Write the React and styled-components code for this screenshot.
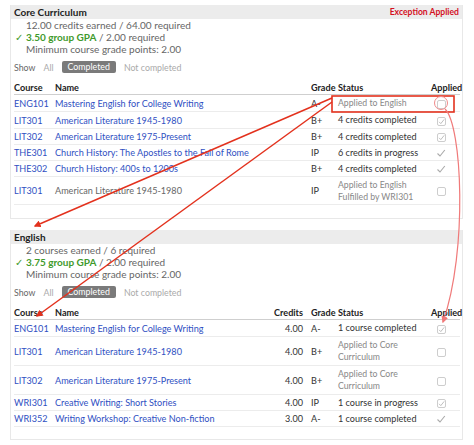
import React from 'react';
import styled, { createGlobalStyle } from 'styled-components';

const linkBlue = '#2f4fc2';
const red = '#e3311d';

const GlobalStyle = createGlobalStyle`
  body {
    margin: 0;
    background: #fff;
    font-family: 'Lato', 'Open Sans', sans-serif;
    color: #333;
  }
`;

const Page = styled.div`
  position: relative;
  width: 474px;
  height: 445px;
  padding: 5px 11px 0 10px;
  box-sizing: border-box;
  display: flex;
  flex-direction: column;
  gap: 11px;
`;

const Panel = styled.section`
  border: 1px solid #e8e8e8;
  border-top: none;
  padding-bottom: ${p => p.$bottom}px;
`;

const PanelHeader = styled.div`
  display: flex;
  justify-content: space-between;
  align-items: center;
  height: 14px;
  padding: 0 3px;
  background: #ececec;

  h2 {
    margin: 0;
    font-size: 10px;
    font-weight: 700;
    color: #222;
  }

  .exception {
    font-size: 8.6px;
    font-weight: 700;
    color: #d4111f;
  }
`;

const Summary = styled.div`
  display: flex;
  flex-direction: column;
  padding-left: 3px;
  font-size: 10px;
  color: #666;

  div {
    height: 12px;
    line-height: 12px;
    padding-left: 12px;
    position: relative;
  }

  .gpa {
    color: #3f9a2c;
    font-weight: 700;
  }

  .check {
    position: absolute;
    left: 1px;
    color: #3f9a2c;
  }
`;

const FilterBar = styled.div`
  display: flex;
  align-items: center;
  gap: 8px;
  margin-top: 6px;
  padding-left: 3px;
  height: 12px;
  font-size: 8.8px;
  color: #aaa;

  .label {
    color: #666;
  }
`;

const Pill = styled.span`
  background: #7a7a7a;
  color: #fff;
  border-radius: 2px;
  padding: 0 6px;
  line-height: 12px;
  height: 12px;
`;

const Table = styled.table`
  width: 446px;
  margin: 7px 0 0 3px;
  border-collapse: collapse;
  table-layout: fixed;
  font-size: 9.1px;

  th {
    font-weight: 700;
    color: #222;
    text-align: left;
    height: 14px;
    padding: 0;
    border-bottom: 1px solid #cfcfcf;
  }

  td {
    padding: 0;
    border-bottom: 1px solid #ececec;
    vertical-align: middle;
  }

  .right {
    text-align: right;
  }

  .grade {
    padding-left: 8px;
  }

  th.applied {
    text-align: right;
    padding-right: 1px;
  }

  td.applied {
    text-align: right;
    padding-right: 14px;
  }
`;

const Row = styled.tr`
  height: ${p => p.$h}px;
`;

const Code = styled.span`
  color: ${linkBlue};
`;

const Name = styled.span`
  color: ${p => (p.$plain ? '#666' : linkBlue)};
`;

const Status = styled.span`
  display: block;
  color: ${p => (p.$muted ? '#888' : '#333')};
  font-size: ${p => (p.$muted ? '8.7px' : '9.1px')};
  line-height: 12px;
`;

const Box = styled.span`
  display: inline-flex;
  align-items: center;
  justify-content: center;
  width: 9px;
  height: 9px;
  border: 1px solid #cdcdcd;
  border-radius: 2px;
  box-sizing: border-box;
  vertical-align: middle;
`;

const Tick = ({ size = 8 }) => (
  <svg width={size} height={size} viewBox="0 0 10 10" style={{ display: 'block' }}>
    <path d="M1.5 5.5 L4 8 L8.8 2" fill="none" stroke="#aaa" strokeWidth="1.1" />
  </svg>
);

const Applied = ({ kind }) => {
  if (kind === 'tick') {
    return <span style={{ display: 'inline-block', verticalAlign: 'middle' }}><Tick size={10} /></span>;
  }
  return <Box>{kind === 'box-tick' ? <Tick size={7} /> : null}</Box>;
};

const Overlay = styled.svg`
  position: absolute;
  top: 0;
  left: 0;
  pointer-events: none;
`;

const core = [
  { code: 'ENG101', name: 'Mastering English for College Writing', grade: 'A-', status: 'Applied to English', muted: true, applied: 'box', h: 17 },
  { code: 'LIT301', name: 'American Literature 1945-1980', grade: 'B+', status: '4 credits completed', applied: 'box-tick', h: 17 },
  { code: 'LIT302', name: 'American Literature 1975-Present', grade: 'B+', status: '4 credits completed', applied: 'box-tick', h: 16 },
  { code: 'THE301', name: 'Church History: The Apostles to the Fall of Rome', grade: 'IP', status: '6 credits in progress', applied: 'tick', h: 16 },
  { code: 'THE302', name: 'Church History: 400s to 1200s', grade: 'B+', status: '4 credits completed', applied: 'tick', h: 16 },
  { code: 'LIT301', name: 'American Literature 1945-1980', plain: true, grade: 'IP', status: ['Applied to English', 'Fulfilled by WRI301'], muted: true, applied: 'box', h: 28 },
];

const english = [
  { code: 'ENG101', name: 'Mastering English for College Writing', credits: '4.00', grade: 'A-', status: '1 course completed', applied: 'box-tick', h: 17 },
  { code: 'LIT301', name: 'American Literature 1945-1980', credits: '4.00', grade: 'B+', status: ['Applied to Core', 'Curriculum'], muted: true, applied: 'box', h: 29 },
  { code: 'LIT302', name: 'American Literature 1975-Present', credits: '4.00', grade: 'B+', status: ['Applied to Core', 'Curriculum'], muted: true, applied: 'box', h: 29 },
  { code: 'WRI301', name: 'Creative Writing: Short Stories', credits: '4.00', grade: 'IP', status: '1 course in progress', applied: 'box-tick', h: 16 },
  { code: 'WRI352', name: 'Writing Workshop: Creative Non-fiction', credits: '3.00', grade: 'A-', status: '1 course completed', applied: 'tick', h: 16 },
];

const StatusCell = ({ row }) => {
  const lines = Array.isArray(row.status) ? row.status : [row.status];
  return (
    <td>
      {lines.map(l => (
        <Status key={l} $muted={row.muted}>{l}</Status>
      ))}
    </td>
  );
};

const CourseTable = ({ rows, credits }) => (
  <Table>
    <colgroup>
      <col style={{ width: 41 }} />
      <col />
      {credits && <col style={{ width: 41 }} />}
      <col style={{ width: 35 }} />
      <col style={{ width: 93 }} />
      <col style={{ width: 29 }} />
    </colgroup>
    <thead>
      <tr>
        <th>Course</th>
        <th>Name</th>
        {credits && <th className="right">Credits</th>}
        <th className="grade">Grade</th>
        <th>Status</th>
        <th className="applied">Applied</th>
      </tr>
    </thead>
    <tbody>
      {rows.map((r, i) => (
        <Row key={i} $h={r.h}>
          <td><Code>{r.code}</Code></td>
          <td><Name $plain={r.plain}>{r.name}</Name></td>
          {credits && <td className="right">{r.credits}</td>}
          <td className="grade">{r.grade}</td>
          <StatusCell row={r} />
          <td className="applied"><Applied kind={r.applied} /></td>
        </Row>
      ))}
    </tbody>
  </Table>
);

const Filters = () => (
  <FilterBar>
    <span className="label">Show</span>
    <span>All</span>
    <Pill>Completed</Pill>
    <span>Not completed</span>
  </FilterBar>
);

const App = () => {
  return (
    <>
      <GlobalStyle />
      <Page>
        <Panel $bottom={13}>
          <PanelHeader>
            <h2>Core Curriculum</h2>
            <span className="exception">Exception Applied</span>
          </PanelHeader>
          <Summary>
            <div>12.00 credits earned / 64.00 required</div>
            <div><span className="check">✓</span><span className="gpa">3.50 group GPA</span> / 2.00 required</div>
            <div>Minimum course grade points: 2.00</div>
          </Summary>
          <Filters />
          <CourseTable rows={core} />
        </Panel>

        <Panel $bottom={12}>
          <PanelHeader>
            <h2>English</h2>
          </PanelHeader>
          <Summary>
            <div>2 courses earned / 6 required</div>
            <div><span className="check">✓</span><span className="gpa">3.75 group GPA</span> / 2.00 required</div>
            <div>Minimum course grade points: 2.00</div>
          </Summary>
          <Filters />
          <CourseTable rows={english} credits />
        </Panel>

        <Overlay width="474" height="445" viewBox="0 0 474 445">
          <defs>
            <marker id="head" viewBox="0 0 10 10" refX="8" refY="5" markerWidth="7" markerHeight="7" orient="auto-start-reverse" markerUnits="userSpaceOnUse">
              <path d="M0 0 L10 5 L0 10 z" fill={red} />
            </marker>
            <marker id="headPink" viewBox="0 0 10 10" refX="8" refY="5" markerWidth="7" markerHeight="7" orient="auto" markerUnits="userSpaceOnUse">
              <path d="M0 0 L10 5 L0 10 z" fill="#f07a7a" />
            </marker>
          </defs>
          <rect x="332" y="96" width="122" height="16" fill="none" stroke={red} strokeWidth="1.6" />
          <line x1="332" y1="98" x2="35" y2="226" stroke={red} strokeWidth="1.5" markerEnd="url(#head)" />
          <line x1="332" y1="102" x2="37" y2="316" stroke={red} strokeWidth="1.5" markerEnd="url(#head)" />
          <circle cx="441" cy="103" r="6.5" fill="none" stroke="#f08a8a" strokeWidth="1" />
          <path d="M445 109 C462 125 468 250 443 322" fill="none" stroke="#f07a7a" strokeWidth="1.2" markerEnd="url(#headPink)" />
        </Overlay>
      </Page>
    </>
  );
};

export default App;
